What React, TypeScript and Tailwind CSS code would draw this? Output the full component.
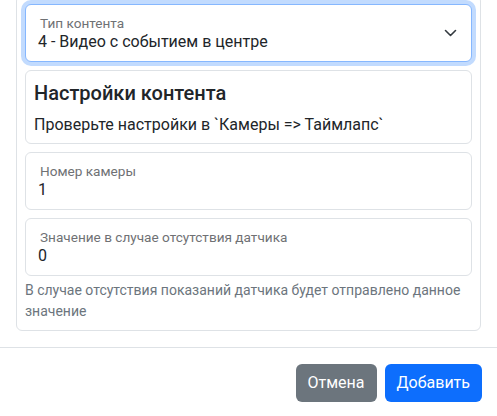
import { useState } from 'react'

type FieldProps = {
  label: string
  value: string
  select?: boolean
  focused?: boolean
}

function FloatingField({ label, value, select, focused }: FieldProps) {
  return (
    <div
      className={
        'relative flex h-[58px] flex-col rounded-[6px] border bg-white pl-3 pr-9 pt-[10px] ' +
        (focused
          ? 'border-[#86b7fe] shadow-[0_0_0_4px_rgba(13,110,253,0.25)]'
          : 'border-[#dee2e6]')
      }
    >
      <span className="pl-[2px] text-[13.6px] leading-4 text-[#6f7174]">{label}</span>
      <span className="text-base leading-[22px] text-[#212529]">{value}</span>
      {select && (
        <svg
          className="absolute right-[14px] top-1/2 h-[8px] w-[13px] -translate-y-1/2"
          viewBox="0 0 13 8"
          fill="none"
          stroke="#343a40"
          strokeWidth="1.6"
          strokeLinecap="round"
          strokeLinejoin="round"
        >
          <path d="M1.5 1.5 6.5 6.5 11.5 1.5" />
        </svg>
      )}
    </div>
  )
}

export default function App() {
  const [camera] = useState('1')
  const [fallback] = useState('0')

  return (
    <div className="h-[416px] w-[497px] overflow-hidden bg-white font-['Roboto',sans-serif] text-[#212529]">
      <div className="px-4 pb-4">
        <div className="-mt-[5px] flex flex-col rounded-[6px] border border-[#dee2e6] p-2">
          <FloatingField label="Тип контента" value="4 - Видео с событием в центре" select focused />

          <div className="mt-2 rounded-[6px] border border-[#dee2e6] px-2 pb-[6px] pt-[10px]">
            <h5 className="mb-2 text-xl font-medium leading-6">Настройки контента</h5>
            <p className="text-base leading-6">Проверьте настройки в `Камеры =&gt; Таймлапс`</p>
          </div>

          <div className="mt-2">
            <FloatingField label="Номер камеры" value={camera} />
          </div>
          <div className="mt-2">
            <FloatingField label="Значение в случае отсутствия датчика" value={fallback} />
          </div>
          <div className="mt-1 text-sm leading-[21px] text-[#6c757d]">
            В случае отсутствия показаний датчика будет отправлено данное значение
          </div>
        </div>
      </div>

      <div className="flex justify-end gap-2 border-t border-[#dee2e6] py-4 pl-4 pr-[15px]">
        <button className="h-[38px] rounded-[6px] bg-[#6c757d] px-3 text-base text-white">Отмена</button>
        <button className="h-[38px] rounded-[6px] bg-[#0d6efd] px-3 text-base text-white">Добавить</button>
      </div>
    </div>
  )
}
